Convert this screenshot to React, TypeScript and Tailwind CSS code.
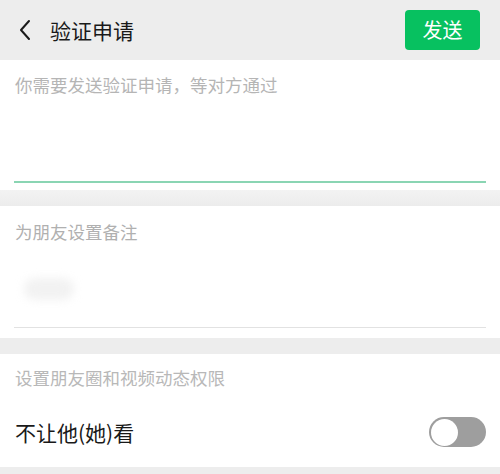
import React from "react";

export default function App() {
  const font = { fontFamily: '"Noto Sans CJK SC", "Noto Sans", sans-serif' };
  return (
    <div className="w-[500px] h-[474px] bg-[#ededed] overflow-hidden" style={font}>
      <div className="h-[60px] flex items-center pl-[16px] pr-[20px]">
        <svg width="14" height="22" viewBox="0 0 14 22" className="ml-[2px]">
          <path d="M11 2 L3 11 L11 20" fill="none" stroke="#1a1a1a" strokeWidth="2" strokeLinecap="round" strokeLinejoin="round" />
        </svg>
        <div className="ml-[18px] text-[21px] text-[#191919] leading-none">验证申请</div>
        <div className="ml-auto w-[75px] h-[40px] rounded-[4px] bg-[#07c160] flex items-center justify-center text-white text-[20px] leading-none">发送</div>
      </div>
      <div className="bg-white h-[130px] px-[14px] pt-[15px] flex flex-col">
        <div className="text-[17.5px] leading-[20px] text-[#b5b5b5] pl-[1px]">你需要发送验证申请，等对方通过</div>
        <div className="mt-auto mb-[7px] h-[2px] bg-[#8ad5b3]" />
      </div>
      <div className="h-[16px] bg-gradient-to-b from-[#f3f3f3] to-[#ececec]" />
      <div className="bg-white h-[132px] px-[14px] pt-[16px] flex flex-col">
        <div className="text-[17.5px] leading-[20px] text-[#b0b0b0] pl-[1px]">为朋友设置备注</div>
        <div className="mt-[36px] ml-[10px] w-[50px] h-[22px] rounded-full bg-[#f2f2f2] blur-[4px]" />
        <div className="mt-auto mb-[10px] h-[1px] bg-[#e2e2e2]" />
      </div>
      <div className="h-[16px] bg-[#ededed]" />
      <div className="bg-white h-[113px] px-[14px] pt-[14px] flex flex-col">
        <div className="text-[17.5px] leading-[20px] text-[#b8b8b8] pl-[1px]">设置朋友圈和视频动态权限</div>
        <div className="flex items-center mt-[29px]">
          <div className="text-[21px] leading-none text-[#191919] pl-[1px]">不让他(她)看</div>
          <div className="ml-auto w-[57px] h-[30px] rounded-full bg-[#9e9e9e] p-[1.5px] flex items-center">
            <div className="w-[27px] h-[27px] rounded-full bg-white" />
          </div>
        </div>
      </div>
    </div>
  );
}
